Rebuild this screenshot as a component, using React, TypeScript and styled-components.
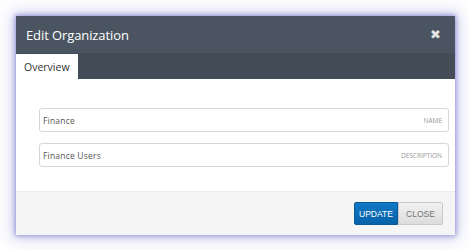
import styled, { createGlobalStyle } from "styled-components";

const Global = createGlobalStyle`
    body {
        margin: 0;
        background: #ffffff;
        font-family: "Open Sans", "Liberation Sans", sans-serif;
    }
`

const Page = styled.div`
    padding: 16px 14px 15px 16px;
`

const Modal = styled.div`
    width: 439px;
    height: 219px;
    display: flex;
    flex-direction: column;
    background: #ffffff;
    box-shadow: 0 0 5px 1px rgba(110, 110, 200, 0.7), 0 0 16px 4px rgba(150, 150, 220, 0.4);
`

const Header = styled.div`
    height: 37px;
    display: flex;
    align-items: center;
    justify-content: space-between;
    padding: 0 14px 0 10px;
    background: #4b5561;
    color: #ffffff;
`

const Title = styled.span`
    font-size: 13px;
    letter-spacing: -0.1px;
`

const CloseX = styled.span`
    font-family: "DejaVu Sans", sans-serif;
    font-weight: 700;
    font-size: 13px;
    color: #e4e4e4;
`

const TabBar = styled.div`
    height: 26px;
    display: flex;
    align-items: flex-end;
    background: #434c57;
`

const Tab = styled.div`
    width: 62px;
    height: 25px;
    display: flex;
    align-items: center;
    padding-left: 8px;
    box-sizing: border-box;
    background: #ffffff;
    color: #333;
    font-size: 10.5px;
`

const Body = styled.div`
    flex: 1;
    display: flex;
    flex-direction: column;
    gap: 11px;
    padding: 29px 6px 0 23px;
`

const Field = styled.div`
    height: 24px;
    display: flex;
    align-items: center;
    justify-content: space-between;
    padding: 0 6px 0 3px;
    border: 1px solid #d6d6d6;
    border-radius: 3px;
    box-sizing: border-box;
`

const Value = styled.span`
    font-size: 8.5px;
    letter-spacing: 0.2px;
    color: #555;
`

const Label = styled.span`
    font-size: 6.5px;
    color: #999;
    text-transform: uppercase;
`

const Footer = styled.div`
    height: 44px;
    display: flex;
    align-items: center;
    justify-content: flex-end;
    padding-right: 12px;
    background: #f5f5f5;
    border-top: 1px solid #ececec;
    box-sizing: border-box;
`

const Button = styled.button<{ $primary?: boolean }>`
    height: 23px;
    width: ${p => p.$primary ? 44 : 45}px;
    padding: 0;
    font-family: "Liberation Sans", Arial, sans-serif;
    font-size: 8.5px;
    border: 1px solid ${p => p.$primary ? '#0a5a99' : '#c8c8c8'};
    border-radius: ${p => p.$primary ? '2px 0 0 2px' : '0 2px 2px 0'};
    color: ${p => p.$primary ? '#ffffff' : '#777'};
    background: ${p => p.$primary
        ? 'linear-gradient(#1078c6, #0862a8)'
        : 'linear-gradient(#f2f2f2, #dcdcdc)'};
`

function App() {
    return (
        <>
            <Global />
            <Page>
                <Modal>
                    <Header>
                        <Title>Edit Organization</Title>
                        <CloseX>✖</CloseX>
                    </Header>
                    <TabBar>
                        <Tab>Overview</Tab>
                    </TabBar>
                    <Body>
                        <Field><Value>Finance</Value><Label>Name</Label></Field>
                        <Field><Value>Finance Users</Value><Label>Description</Label></Field>
                    </Body>
                    <Footer>
                        <Button $primary>UPDATE</Button>
                        <Button>CLOSE</Button>
                    </Footer>
                </Modal>
            </Page>
        </>
    )
}

export default App;
